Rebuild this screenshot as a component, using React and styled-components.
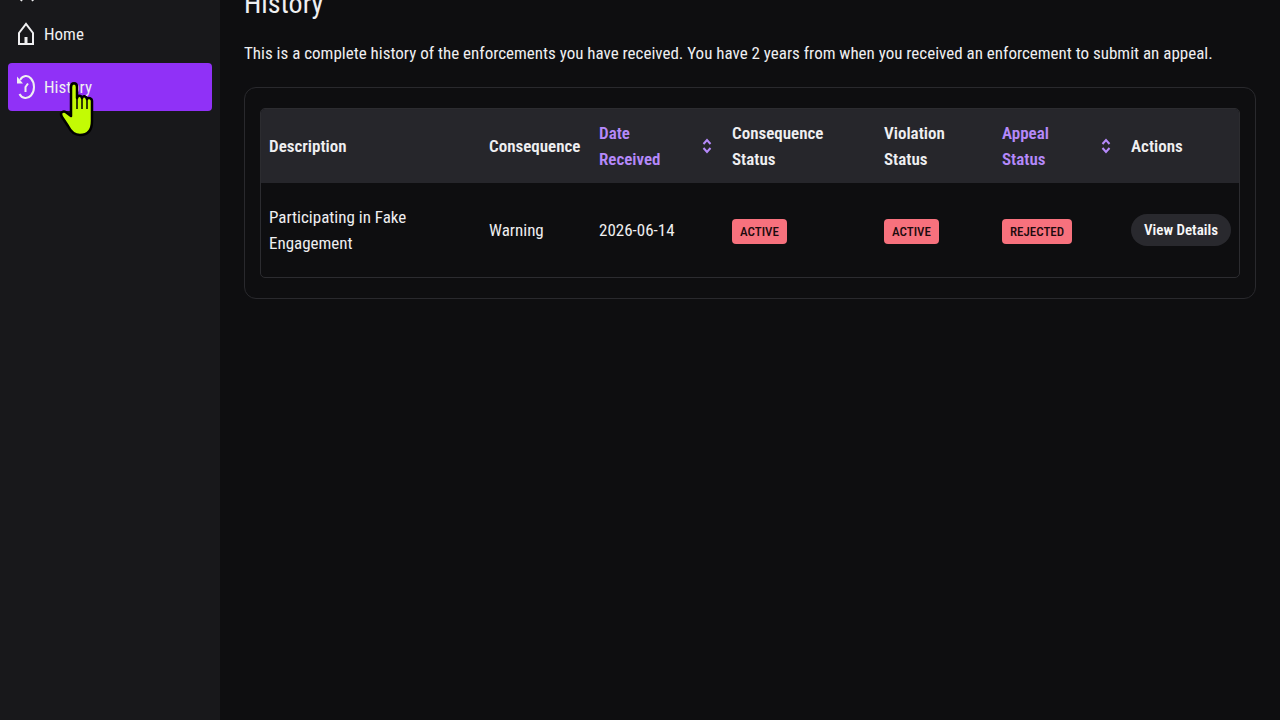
import React from "react";
import styled, { createGlobalStyle } from "styled-components";

const GlobalStyle = createGlobalStyle`
  *, *::before, *::after { box-sizing: border-box; }
  body {
    margin: 0;
    background: #0e0e10;
    color: #efeff1;
    font-family: "Roboto Condensed", Roboto, "Liberation Sans", sans-serif;
    font-size: 17px;
    line-height: 26px;
  }
`;

const Shell = styled.div`
  position: relative;
  display: flex;
  height: 100vh;
  overflow: hidden;
`;

const Sidebar = styled.nav`
  flex: 0 0 220px;
  padding: 0 8px;
  background: #18181b;
`;

const NavList = styled.ul`
  display: flex;
  flex-direction: column;
  gap: 5px;
  margin: -43px 0 0;
  padding: 0;
  list-style: none;
`;

const NavLink = styled.a`
  display: flex;
  align-items: center;
  gap: 8px;
  height: 48px;
  padding: 0 8px;
  border-radius: 4px;
  color: #efeff1;
  text-decoration: none;
  background: ${({ $active }) => ($active ? "#9031f7" : "transparent")};
`;

const NavIcon = styled.svg`
  flex: none;
  width: 20px;
  height: 28px;
  overflow: visible;
  fill: none;
  stroke: currentColor;
  stroke-width: 2;
`;

const Main = styled.main`
  flex: 1;
  min-width: 0;
  padding: 0 24px;
`;

const Title = styled.h1`
  margin: -16px 0 16px;
  font-size: 28px;
  font-weight: 400;
  line-height: 40px;
`;

const Intro = styled.p`
  margin: 0 0 21px;
`;

const Panel = styled.section`
  padding: 20px 15px;
  border: 1px solid #29292d;
  border-radius: 12px;
`;

const TableFrame = styled.div`
  overflow: hidden;
  border: 1px solid #2c2c30;
  border-radius: 5px;
`;

const Table = styled.table`
  width: 100%;
  table-layout: fixed;
  border-collapse: collapse;
  text-align: left;
`;

const HeadCell = styled.th`
  width: ${({ $width }) => ($width ? `${$width}px` : "auto")};
  height: 74px;
  padding: 0 8px;
  background: #26262b;
  font-weight: 600;
`;

const Cell = styled.td`
  height: 94px;
  padding: 0 8px;
`;

const Description = styled.span`
  display: block;
  width: 160px;
`;

const HeadLabel = styled.span`
  display: block;
  width: ${({ $narrow }) => ($narrow ? "72px" : "96px")};
`;

const SortButton = styled.button`
  display: flex;
  align-items: center;
  justify-content: space-between;
  width: 100%;
  padding: 0 4px 0 0;
  border: 0;
  background: none;
  color: #b589fa;
  font: inherit;
  text-align: left;
`;

const SortIcon = styled.svg`
  flex: none;
  width: 10px;
  height: 16px;
  fill: none;
  stroke: currentColor;
  stroke-width: 2;
`;

const Badge = styled.span`
  display: inline-block;
  padding: 0 8px;
  border-radius: 4px;
  background: #f7717d;
  color: #1d0b0e;
  font-size: 13px;
  font-weight: 500;
  line-height: 25px;
  vertical-align: middle;
`;

const DetailsButton = styled.button`
  width: 100px;
  height: 32px;
  padding: 0;
  border: 0;
  border-radius: 16px;
  background: #29292e;
  color: #f7f7f8;
  font: inherit;
  font-size: 15px;
  font-weight: 600;
  white-space: nowrap;
`;

const Pointer = styled.svg`
  position: absolute;
  left: 58px;
  top: 80px;
  width: 38px;
  height: 60px;
  pointer-events: none;
`;

const columns = [
  { label: "Description" },
  { label: "Consequence", width: 110 },
  { label: "Date Received", width: 133, sortable: true },
  { label: "Consequence Status", width: 152 },
  { label: "Violation Status", width: 118 },
  { label: "Appeal Status", width: 129, sortable: true },
  { label: "Actions", width: 116 },
];

const rows = [
  {
    description: "Participating in Fake Engagement",
    consequence: "Warning",
    date: "2026-06-14",
    statuses: ["ACTIVE", "ACTIVE", "REJECTED"],
  },
];

function AccountIcon() {
  return (
    <NavIcon viewBox="0 0 20 28" aria-hidden="true">
      <path d="M7 30L5 34M15 30l2 4" />
    </NavIcon>
  );
}

function HomeIcon() {
  return (
    <NavIcon viewBox="0 0 20 28" aria-hidden="true">
      <path d="M3 24V13L10 4l7 9v11z" />
      <path d="M10 24v-7" strokeWidth="3" />
    </NavIcon>
  );
}

function HistoryIcon() {
  return (
    <NavIcon viewBox="0 0 20 28" aria-hidden="true">
      <path d="M4 7C7 2 12 2 15 5.500C19 10 19 18 15 22.500C12 26 6 26 3.500 21" />
      <path d="M1 3.500v7h6z" fill="currentColor" stroke="none" />
      <path d="M9.500 19v-5l2.500-3.500" />
    </NavIcon>
  );
}

function Column({ label, width, sortable }) {
  return (
    <HeadCell scope="col" $width={width}>
      {sortable ? (
        <SortButton type="button">
          <HeadLabel $narrow>{label}</HeadLabel>
          <SortIcon viewBox="0 0 10 16" aria-hidden="true">
            <path d="M1.500 6 5 2l3.500 4M1.500 10 5 14l3.500-4" />
          </SortIcon>
        </SortButton>
      ) : (
        <HeadLabel>{label}</HeadLabel>
      )}
    </HeadCell>
  );
}

export default function App() {
  return (
    <>
      <GlobalStyle />
      <Shell>
        <Sidebar>
          <NavList>
            <li>
              <NavLink href="#account" aria-label="Account">
                <AccountIcon />
              </NavLink>
            </li>
            <li>
              <NavLink href="#home">
                <HomeIcon />
                Home
              </NavLink>
            </li>
            <li>
              <NavLink href="#history" $active aria-current="page">
                <HistoryIcon />
                History
              </NavLink>
            </li>
          </NavList>
        </Sidebar>
        <Main>
          <Title>History</Title>
          <Intro>
            This is a complete history of the enforcements you have received. You have 2 years from
            when you received an enforcement to submit an appeal.
          </Intro>
          <Panel>
            <TableFrame>
              <Table>
                <thead>
                  <tr>
                    {columns.map((column) => (
                      <Column key={column.label} {...column} />
                    ))}
                  </tr>
                </thead>
                <tbody>
                  {rows.map((row) => (
                    <tr key={row.date}>
                      <Cell>
                        <Description>{row.description}</Description>
                      </Cell>
                      <Cell>{row.consequence}</Cell>
                      <Cell>{row.date}</Cell>
                      {row.statuses.map((status, index) => (
                        <Cell key={index}>
                          <Badge>{status}</Badge>
                        </Cell>
                      ))}
                      <Cell>
                        <DetailsButton type="button">View Details</DetailsButton>
                      </Cell>
                    </tr>
                  ))}
                </tbody>
              </Table>
            </TableFrame>
          </Panel>
        </Main>
        <Pointer viewBox="0 0 38 60" aria-hidden="true">
          <path
            d="M13 32V7c0-5 6-5 6 0v11c1-3 4-3 5 0c1-3 4-2 5 1c1-2 5-1 5 2v20c0 10-5 14-12 14c-6 0-9-3-12-9L4 37c-3-5 2-7 5-4l4 3z"
            fill="#c3fb04"
            stroke="#000"
            strokeWidth="2.5"
            strokeLinejoin="round"
          />
          <path d="M19 16v13M24 18v11M29 19v10" fill="none" stroke="#000" strokeWidth="1.5" />
        </Pointer>
      </Shell>
    </>
  );
}
